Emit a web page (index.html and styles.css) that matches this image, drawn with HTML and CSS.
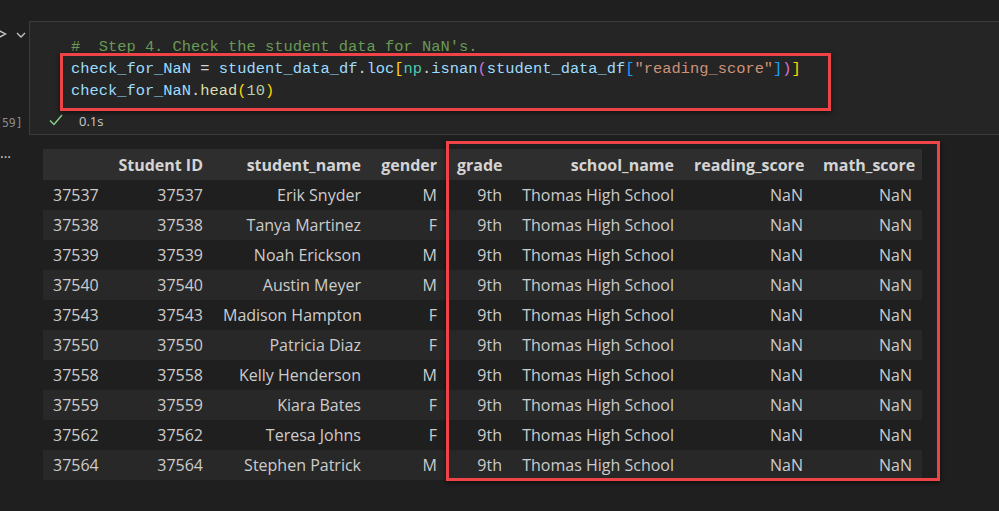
FILE: index.html
```html
<!DOCTYPE html>
<html>
<head>
<meta charset="utf-8">
<link rel="stylesheet" href="styles.css">
</head>
<body>
<div class="cell-row">
  <div class="gutter">
    <div class="run-icons">
      <svg class="run" width="8" height="12" viewBox="0 0 8 12"><path d="M-3 1.5 L5.5 6 L-3 10.5" fill="none" stroke="#c5c5c5" stroke-width="1.4"/></svg>
      <svg class="chev" width="10" height="6" viewBox="0 0 10 6"><path d="M1 1 L5 5 L9 1" fill="none" stroke="#c5c5c5" stroke-width="1.3"/></svg>
    </div>
    <div class="exec-count">[59]</div>
  </div>
  <div class="cell">
    <div class="editor">
      <div class="line"><span class="cm">#  Step 4. Check the student data for NaN's.</span></div>
      <div class="line"><span class="v">check_for_NaN</span> <span class="op">=</span> <span class="v">student_data_df</span><span class="op">.</span><span class="v">loc</span><span class="b1">[</span><span class="mod">np</span><span class="op">.</span><span class="v">isnan</span><span class="b2">(</span><span class="v">student_data_df</span><span class="b3">[</span><span class="str">"reading_score"</span><span class="b3">]</span><span class="b2">)</span><span class="b1">]</span></div>
      <div class="line"><span class="v">check_for_NaN</span><span class="op">.</span><span class="fn">head</span><span class="b1">(</span><span class="num">10</span><span class="b1">)</span></div>
    </div>
    <div class="status">
      <svg class="check" width="14" height="12" viewBox="0 0 14 12"><path d="M1 6.5 L5 10.5 L13 1" fill="none" stroke="#89d185" stroke-width="1.5"/></svg>
      <span class="time">0.1s</span>
    </div>
    <div class="hl hl-code"></div>
  </div>
</div>

<div class="out-row">
  <div class="out-gutter">···</div>
  <div class="out">
    <table class="df">
      <colgroup>
        <col class="c-idx"><col class="c-id"><col class="c-name"><col class="c-gender"><col class="c-grade"><col class="c-school"><col class="c-read"><col class="c-math">
      </colgroup>
      <thead>
        <tr><th></th><th>Student ID</th><th>student_name</th><th>gender</th><th>grade</th><th>school_name</th><th>reading_score</th><th>math_score</th></tr>
      </thead>
      <tbody>
        <tr><th>37537</th><td>37537</td><td>Erik Snyder</td><td>M</td><td>9th</td><td>Thomas High School</td><td>NaN</td><td>NaN</td></tr>
        <tr><th>37538</th><td>37538</td><td>Tanya Martinez</td><td>F</td><td>9th</td><td>Thomas High School</td><td>NaN</td><td>NaN</td></tr>
        <tr><th>37539</th><td>37539</td><td>Noah Erickson</td><td>M</td><td>9th</td><td>Thomas High School</td><td>NaN</td><td>NaN</td></tr>
        <tr><th>37540</th><td>37540</td><td>Austin Meyer</td><td>M</td><td>9th</td><td>Thomas High School</td><td>NaN</td><td>NaN</td></tr>
        <tr><th>37543</th><td>37543</td><td>Madison Hampton</td><td>F</td><td>9th</td><td>Thomas High School</td><td>NaN</td><td>NaN</td></tr>
        <tr><th>37550</th><td>37550</td><td>Patricia Diaz</td><td>F</td><td>9th</td><td>Thomas High School</td><td>NaN</td><td>NaN</td></tr>
        <tr><th>37558</th><td>37558</td><td>Kelly Henderson</td><td>M</td><td>9th</td><td>Thomas High School</td><td>NaN</td><td>NaN</td></tr>
        <tr><th>37559</th><td>37559</td><td>Kiara Bates</td><td>F</td><td>9th</td><td>Thomas High School</td><td>NaN</td><td>NaN</td></tr>
        <tr><th>37562</th><td>37562</td><td>Teresa Johns</td><td>F</td><td>9th</td><td>Thomas High School</td><td>NaN</td><td>NaN</td></tr>
        <tr><th>37564</th><td>37564</td><td>Stephen Patrick</td><td>M</td><td>9th</td><td>Thomas High School</td><td>NaN</td><td>NaN</td></tr>
      </tbody>
    </table>
    <div class="hl hl-table"></div>
  </div>
</div>
</body>
</html>
```
FILE: styles.css
```css
html, body {
  margin: 0;
  padding: 0;
  background: #1f1f1f;
  overflow: hidden;
}
body {
  width: 999px;
  height: 511px;
  font-family: "Open Sans", "Noto Sans", sans-serif;
  color: #cccccc;
}
.cell-row {
  display: flex;
  margin-top: 21px;
}
.gutter {
  width: 29px;
  flex: none;
  display: flex;
  flex-direction: column;
  justify-content: space-between;
  height: 114px;
}
.run-icons {
  display: flex;
  align-items: center;
  gap: 8px;
  margin-top: 7px;
}
.run { display: block; flex: none; }
.chev { display: block; flex: none; margin-top: 1px; }
.exec-count {
  font-family: "DejaVu Sans Mono", monospace;
  font-size: 11.5px;
  color: #8b8b8b;
  margin-left: -5px;
  margin-bottom: 5px;
  height: 14px;
  line-height: 14px;
}
.cell {
  flex: 1;
  position: relative;
  background: #252526;
  border: 1px solid #3b3b3b;
  border-right: none;
  height: 112px;
}
.editor {
  padding: 14px 0 6px 41px;
  font-family: "Liberation Mono", "DejaVu Sans Mono", monospace;
  font-size: 15.4px;
}
.line {
  height: 22px;
  line-height: 22px;
  white-space: pre;
  color: #9cdcfe;
}
.cm { color: #6a9955; }
.v { color: #9cdcfe; }
.op { color: #d4d4d4; }
.mod { color: #4ec9b0; }
.fn { color: #dcdcaa; }
.str { color: #ce9178; }
.num { color: #b5cea8; }
.b1 { color: #ffd700; }
.b2 { color: #da70d6; }
.b3 { color: #179fff; }
.status {
  height: 26px;
  display: flex;
  align-items: center;
  padding-left: 19px;
}
.check { display: block; margin-top: -2px; }
.time {
  margin-left: 16px;
  font-size: 13px;
  color: #cccccc;
  line-height: 26px;
}
.hl {
  position: absolute;
  border: 3px solid #ee4447;
  box-sizing: border-box;
  box-shadow: 0 2px 5px rgba(0, 0, 0, 0.55);
  pointer-events: none;
}
.hl-code {
  left: 30px;
  top: 31px;
  width: 771px;
  height: 58px;
}
.out-row {
  display: flex;
  margin-top: 14px;
}
.out-gutter {
  width: 43px;
  flex: none;
  font-size: 14px;
  line-height: 10px;
  height: 10px;
  color: #cccccc;
  margin-top: 3px;
}
.out {
  position: relative;
}
.df {
  border-collapse: collapse;
  table-layout: fixed;
  width: 879px;
  font-size: 16px;
}
.c-idx { width: 65px; }
.c-id { width: 105px; }
.c-name { width: 158px; }
.c-gender { width: 76px; }
.c-grade { width: 65px; }
.c-school { width: 172px; }
.c-read { width: 129px; }
.c-math { width: 109px; }
.df th, .df td {
  padding: 0 10px;
  text-align: right;
  white-space: nowrap;
  font-weight: normal;
}
.df thead tr {
  height: 31px;
  background: #2e2e2e;
}
.df thead th {
  font-weight: bold;
  color: #d4d4d4;
}
.df tbody tr {
  height: 30px;
  background: #1f1f1f;
}
.df tbody tr:nth-child(even) {
  background: #282828;
}
.df tbody th {
  text-align: left;
}
.hl-table {
  left: 403px;
  top: -8px;
  width: 494px;
  height: 340px;
}
```
